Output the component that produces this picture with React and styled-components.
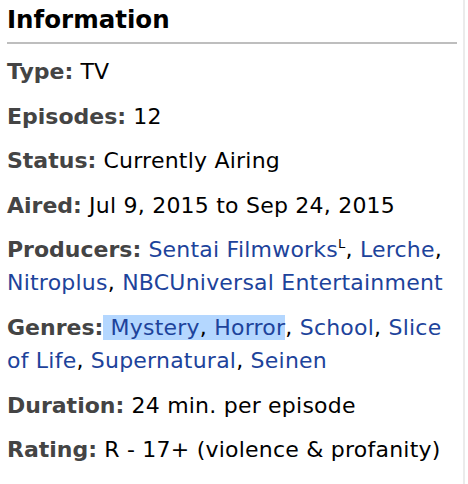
import React from "react";
import styled, { createGlobalStyle } from "styled-components";

const Global = createGlobalStyle`
  html, body { margin: 0; padding: 0; background: #fff; }
  body { font-family: "DejaVu Sans", Verdana, sans-serif; }
`;

const Sidebar = styled.div`
  width: 456px;
  height: 484px;
  padding-left: 7px;
  border-right: 2px solid #ebebeb;
  box-sizing: content-box;
`;

const Heading = styled.h2`
  margin: 0;
  padding: 5px 0 8px;
  font-size: 24.5px;
  font-weight: bold;
  color: #000;
  line-height: 29px;
  border-bottom: 2px solid #bebebe;
  width: 450px;
`;

const List = styled.div`
  display: flex;
  flex-direction: column;
  gap: 11.6px;
  padding-top: 11px;
  font-size: 22px;
  letter-spacing: 0.22px;
  line-height: 33px;
  color: #000;
`;

const Row = styled.div``;

const Label = styled.span`
  font-weight: bold;
  color: #444;
  letter-spacing: 0;
`;

const Link = styled.a`
  color: #1d439b;
  text-decoration: none;
  cursor: pointer;
`;

const Selection = styled.span`
  background: #b4d7ff;
`;

const Sup = styled.sup`
  font-size: 13px;
  line-height: 0;
  color: #000;
  vertical-align: 9px;
`;

export default function App() {
  return (
    <>
      <Global />
      <Sidebar>
        <Heading>Information</Heading>
        <List>
          <Row><Label>Type:</Label> TV</Row>
          <Row><Label>Episodes:</Label> 12</Row>
          <Row><Label>Status:</Label> Currently Airing</Row>
          <Row><Label>Aired:</Label> Jul 9, 2015 to Sep 24, 2015</Row>
          <Row>
            <Label>Producers:</Label> <Link>Sentai Filmworks</Link>
            <Sup>L</Sup>, <Link>Lerche</Link>, <Link>Nitroplus</Link>,{" "}
            <Link>NBCUniversal Entertainment</Link>
          </Row>
          <Row>
            <Label>Genres:</Label>
            <Selection>
              {" "}
              <Link>Mystery</Link>, <Link>Horror</Link>
            </Selection>
            , <Link>School</Link>, <Link>Slice of Life</Link>,{" "}
            <Link>Supernatural</Link>, <Link>Seinen</Link>
          </Row>
          <Row><Label>Duration:</Label> 24 min. per episode</Row>
          <Row><Label>Rating:</Label> R - 17+ (violence &amp; profanity)</Row>
        </List>
      </Sidebar>
    </>
  );
}
